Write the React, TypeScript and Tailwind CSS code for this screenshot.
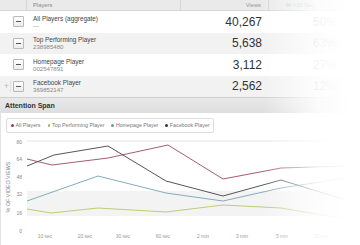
import React from 'react'

const PLAYERS = [
  { name: 'All Players (aggregate)', id: '—', views: '40,267', pct: '50%' },
  { name: 'Top Performing Player', id: '238985480', views: '5,638', pct: '63%' },
  { name: 'Homepage Player', id: '002547891', views: '3,112', pct: '27%' },
  { name: 'Facebook Player', id: '369852147', views: '2,562', pct: '12%' },
]

const SERIES = [
  { label: 'All Players', color: '#a85a76', dot: 'bg-[#9b3b5a]', pts: '26,159 51,165 107,158 167,145 222,179 280,168 345,166' },
  { label: 'Top Performing Player', color: '#c2cb78', dot: 'bg-[#a6b84a]', pts: '26,209 50,213 97,208 165,212 222,205 280,208 345,219' },
  { label: 'Homepage Player', color: '#84adb8', dot: 'bg-[#6a9aa8]', pts: '26,201 97,176 165,193 222,201 280,188 345,178' },
  { label: 'Facebook Player', color: '#555555', dot: 'bg-[#333]', pts: '26,166 53,155 107,146 165,181 222,196 280,180 345,200' },
]

const Y_TICKS = [
  { v: '80', y: 143.5 },
  { v: '64', y: 161 },
  { v: '48', y: 178.5 },
  { v: '32', y: 196 },
  { v: '16', y: 214.5 },
  { v: '0', y: 232.5 },
]

const X_TICKS = [
  { t: '10 sec', x: 44 },
  { t: '20 sec', x: 84 },
  { t: '30 sec', x: 122 },
  { t: '60 sec', x: 162 },
  { t: '2 min', x: 202 },
  { t: '3 min', x: 241 },
  { t: '5 min', x: 281 },
  { t: '10 min', x: 320 },
]

const MinusBox = () => (
  <span className="flex h-[11px] w-[11px] items-center justify-center rounded-[1px] border border-[#b8b8b8] bg-gradient-to-b from-white to-[#ececec]">
    <span className="h-px w-[5px] bg-[#555]" />
  </span>
)

const AttentionChart = () => (
  <svg width={360} height={112} className="block" fontFamily="'Liberation Sans', Arial, sans-serif">
    <g transform="translate(0,-133)">
      <line x1={26} y1={141} x2={360} y2={141} stroke="#e3e3e3" strokeWidth={1} />
      <rect x={26} y={191} width={334} height={25} fill="#f3f3f3" />
      {Y_TICKS.map(t => (
        <text key={t.v} x={21} y={t.y} fontSize={5} fill="#888" textAnchor="end">
          {t.v}
        </text>
      ))}
      {X_TICKS.map(t => (
        <text key={t.t} x={t.x} y={238} fontSize={5} fill="#999" textAnchor="middle">
          {t.t}
        </text>
      ))}
      <text x={9} y={187} fontSize={5.4} fill="#888" textAnchor="middle" transform="rotate(-90 9 187)">
        % OF VIDEO VIEWS
      </text>
      {SERIES.map(s => (
        <polyline key={s.label} points={s.pts} fill="none" stroke={s.color} strokeWidth={1} strokeLinejoin="round" />
      ))}
    </g>
  </svg>
)

export default function App() {
  return (
    <div className="relative h-[245px] w-[360px] overflow-hidden bg-white font-['Liberation_Sans',Arial,sans-serif]">
      {/* table header */}
      <div className="flex h-[11px] border-b border-[#d6d6d6] bg-[#eaeaea] text-[5.8px] leading-[10px]">
        <div className="w-[27px] border-r border-[#d6d6d6]" />
        <div className="w-[154px] border-r border-[#d6d6d6] pl-[6px] text-[#888]">Players</div>
        <div className="w-[88px] border-r border-[#d6d6d6] pr-[7px] text-right text-[#999]">Views</div>
        <div className="flex-1 pl-[17px] text-[#bbb]">% &gt;10 Sec</div>
      </div>

      {/* rows */}
      {PLAYERS.map((p, i) => (
        <div key={p.name} className={`flex h-[21.5px] items-center ${i % 2 ? 'bg-[#f2f2f2]' : 'bg-white'}`}>
          <div className="flex w-[27px] items-center justify-end gap-[2px] pr-[3px]">
            {i === 3 && (
              <span className="flex h-[11px] items-center border-r border-[#e0e0e0] pr-[1px] text-[9px] leading-none text-[#bdbdbd]">+</span>
            )}
            <MinusBox />
          </div>
          <div className="flex w-[154px] flex-col pl-[6px]">
            <span className="text-[6.4px] leading-[7px] text-[#444]">{p.name}</span>
            <span className="text-[6.1px] leading-[7px] text-[#888]">{p.id}</span>
          </div>
          <div className="w-[88px] pr-[7px] text-right text-[12px] leading-none text-[#333]">{p.views}</div>
          <div className="w-[68px] text-right text-[12px] leading-none text-[#aaa]">{p.pct}</div>
        </div>
      ))}

      {/* attention span */}
      <div className="h-[16px] border-t border-[#cfcfcf] bg-gradient-to-b from-[#e8e8e8] to-[#dedede] pl-[5px] text-[7px] font-bold leading-[15px] text-[#333]">
        Attention Span
      </div>

      <div className="border-l border-[#e2e2e2]">
        <div className="px-[5px] pt-[5px]">
          <div className="flex h-[15px] w-[208px] items-center gap-[7px] rounded-[2px] border border-[#dddddd] pl-[4px] text-[5.3px] text-[#777]">
            {SERIES.map(s => (
              <span key={s.label} className="flex items-center gap-[2px]">
                <span className={`h-[2.5px] w-[2.5px] rounded-full ${s.dot}`} />
                {s.label}
              </span>
            ))}
          </div>
        </div>
        <AttentionChart />
      </div>

      {/* right-side fade */}
      <div className="pointer-events-none absolute inset-0 bg-[linear-gradient(90deg,rgba(255,255,255,0)_73%,rgba(255,255,255,0.85)_88%,#fff_97%)]" />
    </div>
  )
}
